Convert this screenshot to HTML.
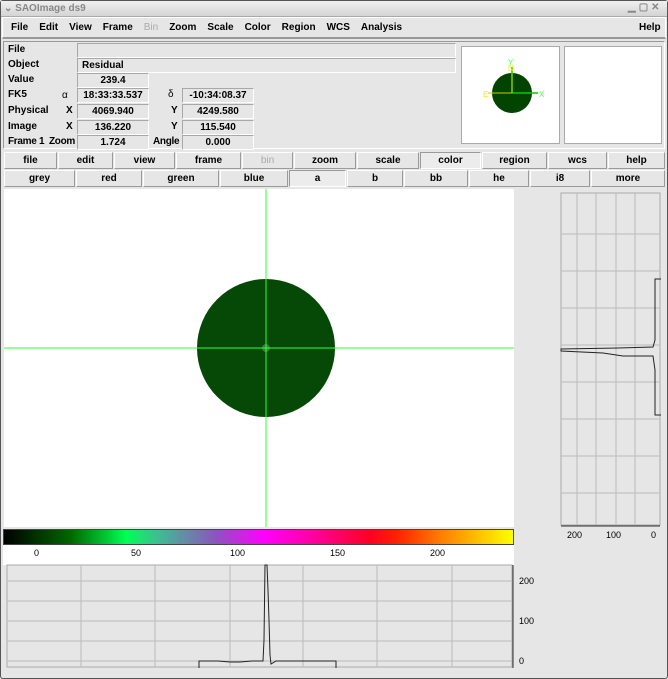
<!DOCTYPE html>
<html><head><meta charset="utf-8"><style>
*{margin:0;padding:0;box-sizing:border-box}
body{width:668px;height:679px;background:#e6e6e6;font:bold 10px "Liberation Sans",sans-serif;color:#000;position:relative;overflow:hidden}
.a{position:absolute}
.f{position:absolute;border:1px solid #a8a8a8;border-right-color:#fff;border-bottom-color:#fff;background:#e6e6e6;text-align:center;line-height:13px;height:15px}
.f.l{text-align:left;padding-left:4px}
.b{position:absolute;height:17px;border:1px solid #fff;border-right-color:#9a9a9a;border-bottom-color:#9a9a9a;background:#e6e6e6;text-align:center;line-height:15px}
.lb{position:absolute;line-height:12px}
svg text{font-weight:normal}
</style></head><body>
<div class="a" style="left:0;top:0;width:668px;height:679px;border:1px solid #555;border-radius:3px"></div>
<div class="a" style="left:1px;top:1px;width:666px;height:16px;background:linear-gradient(#f0f0f0,#d4d4d4);border-bottom:1px solid #aaa"></div>
<div class="a" style="left:4px;top:3px;color:#888;font-size:10px">⌄ SAOImage ds9</div>
<div class="a" style="left:628px;top:2px;color:#888;font-size:10px;letter-spacing:3px">▁▢✕</div>
<div class="a" style="left:2px;top:17px;width:664px;height:22px;border:1px solid #fff;border-bottom:2px solid #999"></div>
<div class="a" style="left:11px;top:22px;font-size:10px;word-spacing:0">
<span style="margin-right:11px">File</span><span style="margin-right:11px">Edit</span><span style="margin-right:11px">View</span><span style="margin-right:11px">Frame</span><span style="margin-right:11px;color:#aaa;font-weight:normal">Bin</span><span style="margin-right:11px">Zoom</span><span style="margin-right:11px">Scale</span><span style="margin-right:11px">Color</span><span style="margin-right:11px">Region</span><span style="margin-right:11px">WCS</span><span>Analysis</span></div>
<div class="a" style="left:639px;top:22px">Help</div>
<div class="a" style="left:3px;top:41px;width:662px;height:108px;border:1px solid #999;border-right-color:#fff;border-bottom-color:#fff"></div>
<div class="lb" style="left:8px;top:44px">File</div>
<div class="lb" style="left:8px;top:59px">Object</div>
<div class="lb" style="left:8px;top:74px">Value</div>
<div class="lb" style="left:8px;top:89px">FK5</div><div class="lb" style="left:62px;top:90px;font-weight:normal">α</div>
<div class="lb" style="left:8px;top:105px">Physical</div><div class="lb" style="left:66px;top:105px">X</div>
<div class="lb" style="left:8px;top:121px">Image</div><div class="lb" style="left:66px;top:121px">X</div>
<div class="lb" style="left:8px;top:136px;letter-spacing:-0.3px">Frame 1</div><div class="lb" style="left:49px;top:136px;letter-spacing:-0.3px">Zoom</div>
<div class="f" style="left:77px;top:43px;width:379px"></div>
<div class="f l" style="left:77px;top:58px;width:379px">Residual</div>
<div class="f" style="left:77px;top:73px;width:72px">239.4</div>
<div class="f" style="left:77px;top:88px;width:72px">18:33:33.537</div>
<div class="f" style="left:77px;top:104px;width:72px">4069.940</div>
<div class="f" style="left:77px;top:120px;width:72px">136.220</div>
<div class="f" style="left:77px;top:135px;width:72px">1.724</div>
<div class="lb" style="left:168px;top:89px;font-weight:normal">δ</div>
<div class="lb" style="left:171px;top:105px">Y</div>
<div class="lb" style="left:171px;top:121px">Y</div>
<div class="lb" style="left:153px;top:136px;letter-spacing:-0.3px">Angle</div>
<div class="f" style="left:182px;top:88px;width:72px">-10:34:08.37</div>
<div class="f" style="left:182px;top:104px;width:72px">4249.580</div>
<div class="f" style="left:182px;top:120px;width:72px">115.540</div>
<div class="f" style="left:182px;top:135px;width:72px">0.000</div>
<div class="a" style="left:461px;top:46px;width:99px;height:98px;background:#fff;border:1px solid #aaa">
<svg width="97" height="96"><circle cx="50" cy="46" r="20" fill="#004400"/><line x1="50" y1="46" x2="76" y2="46" stroke="#00cc00" stroke-width="1.5"/><line x1="50" y1="46" x2="50" y2="20" stroke="#00cc00" stroke-width="1.5"/><line x1="50" y1="46" x2="26" y2="46" stroke="#cccc00"/><line x1="50" y1="46" x2="50" y2="26" stroke="#cccc00"/><text x="77" y="50" fill="#5f5" font-size="8" font-family="Liberation Sans">X</text><text x="46" y="18" fill="#5f5" font-size="8" font-family="Liberation Sans">Y</text><text x="21" y="50" fill="#ee0" font-size="8" font-family="Liberation Sans">E</text><text x="46" y="24" fill="#ee0" font-size="8" font-family="Liberation Sans">N</text></svg></div>
<div class="a" style="left:564px;top:46px;width:98px;height:98px;background:#fff;border:1px solid #aaa"></div>
<div class="b" style="left:4px;top:152px;width:53px">file</div>
<div class="b" style="left:58px;top:152px;width:55px">edit</div>
<div class="b" style="left:114px;top:152px;width:61px">view</div>
<div class="b" style="left:176px;top:152px;width:65px">frame</div>
<div class="b" style="left:242px;top:152px;width:51px;color:#aaa;font-weight:normal">bin</div>
<div class="b" style="left:294px;top:152px;width:62px">zoom</div>
<div class="b" style="left:357px;top:152px;width:62px">scale</div>
<div class="b" style="left:420px;top:152px;width:61px;border-color:#9a9a9a #fff #fff #9a9a9a;background:#ececec">color</div>
<div class="b" style="left:482px;top:152px;width:65px">region</div>
<div class="b" style="left:548px;top:152px;width:59px">wcs</div>
<div class="b" style="left:608px;top:152px;width:57px">help</div>
<div class="b" style="left:4px;top:170px;width:71px">grey</div>
<div class="b" style="left:76px;top:170px;width:66px">red</div>
<div class="b" style="left:143px;top:170px;width:76px">green</div>
<div class="b" style="left:220px;top:170px;width:68px">blue</div>
<div class="b" style="left:289px;top:170px;width:57px;border-color:#9a9a9a #fff #fff #9a9a9a;background:#ececec">a</div>
<div class="b" style="left:347px;top:170px;width:56px">b</div>
<div class="b" style="left:404px;top:170px;width:64px">bb</div>
<div class="b" style="left:469px;top:170px;width:60px">he</div>
<div class="b" style="left:530px;top:170px;width:60px">i8</div>
<div class="b" style="left:591px;top:170px;width:74px">more</div>
<div class="a" style="left:4px;top:189px;width:510px;height:338px;background:#fff">
<svg width="510" height="338"><circle cx="262" cy="159" r="69" fill="#064806"/><circle cx="262" cy="159" r="4" fill="#3a7a3a"/><line x1="262" y1="0" x2="262" y2="338" stroke="#3f3"/><line x1="0" y1="159" x2="510" y2="159" stroke="#3f3"/></svg></div>
<div class="a" style="left:3px;top:529px;width:511px;height:16px;border:1px solid #444;background:linear-gradient(90deg,#000 0%,#006600 13%,#00ff55 24%,#3cc090 30%,#9050c0 42%,#ff00ff 51%,#ff0090 62%,#ff0020 72%,#ff2000 77%,#ff8000 86%,#ffff00 100%)"></div>
<div class="a" style="left:3px;top:545px;width:511px;height:20px;background:#fff"></div>
<div class="a" style="left:34px;top:548px;font-weight:normal;font-size:9px">0</div>
<div class="a" style="left:131px;top:548px;font-weight:normal;font-size:9px">50</div>
<div class="a" style="left:230px;top:548px;font-weight:normal;font-size:9px">100</div>
<div class="a" style="left:330px;top:548px;font-weight:normal;font-size:9px">150</div>
<div class="a" style="left:430px;top:548px;font-weight:normal;font-size:9px">200</div>
<svg class="a" style="left:0;top:560px" width="560" height="110">
<rect x="7" y="5" width="505" height="102" fill="#e6e6e6" stroke="#aaa"/>
<g stroke="#bbb"><line x1="81" y1="5" x2="81" y2="107"/><line x1="155" y1="5" x2="155" y2="107"/><line x1="230" y1="5" x2="230" y2="107"/><line x1="303" y1="5" x2="303" y2="107"/><line x1="377" y1="5" x2="377" y2="107"/><line x1="452" y1="5" x2="452" y2="107"/>
<line x1="7" y1="21" x2="512" y2="21"/><line x1="7" y1="41" x2="512" y2="41"/><line x1="7" y1="61" x2="512" y2="61"/><line x1="7" y1="81" x2="512" y2="81"/><line x1="7" y1="101" x2="512" y2="101"/></g>
<polyline fill="none" stroke="#222" points="199,108 199,101 218,101 230,102 240,102 252,101 258,101 263,101 264,80 265,5 267,5 268,30 269,60 270,95 271,104 276,101 290,101 310,101 336,101 336,108"/>
<line x1="513" y1="5" x2="513" y2="108" stroke="#333"/>
<g font-size="9" font-family="Liberation Sans" fill="#000"><text x="519" y="24">200</text><text x="519" y="64">100</text><text x="519" y="104">0</text></g>
</svg>
<svg class="a" style="left:558px;top:190px" width="106" height="350">
<rect x="3" y="3" width="99" height="332" fill="#e6e6e6" stroke="#aaa"/>
<g stroke="#bbb"><line x1="19" y1="3" x2="19" y2="335"/><line x1="38" y1="3" x2="38" y2="335"/><line x1="58" y1="3" x2="58" y2="335"/><line x1="77" y1="3" x2="77" y2="335"/>
<line x1="3" y1="44" x2="102" y2="44"/><line x1="3" y1="81" x2="102" y2="81"/><line x1="3" y1="118" x2="102" y2="118"/><line x1="3" y1="155" x2="102" y2="155"/><line x1="3" y1="192" x2="102" y2="192"/><line x1="3" y1="229" x2="102" y2="229"/><line x1="3" y1="266" x2="102" y2="266"/><line x1="3" y1="303" x2="102" y2="303"/></g>
<polyline fill="none" stroke="#222" points="103,89 97,89 97,150 95,157 60,158 3,159 3,161 45,163 65,166 95,166 97,180 97,225 103,225"/>
<line x1="3" y1="336" x2="102" y2="336" stroke="#333"/>
<g font-size="9" font-family="Liberation Sans"><text x="9" y="348">200</text><text x="48" y="348">100</text><text x="93" y="348">0</text></g>
</svg>
</body></html>
